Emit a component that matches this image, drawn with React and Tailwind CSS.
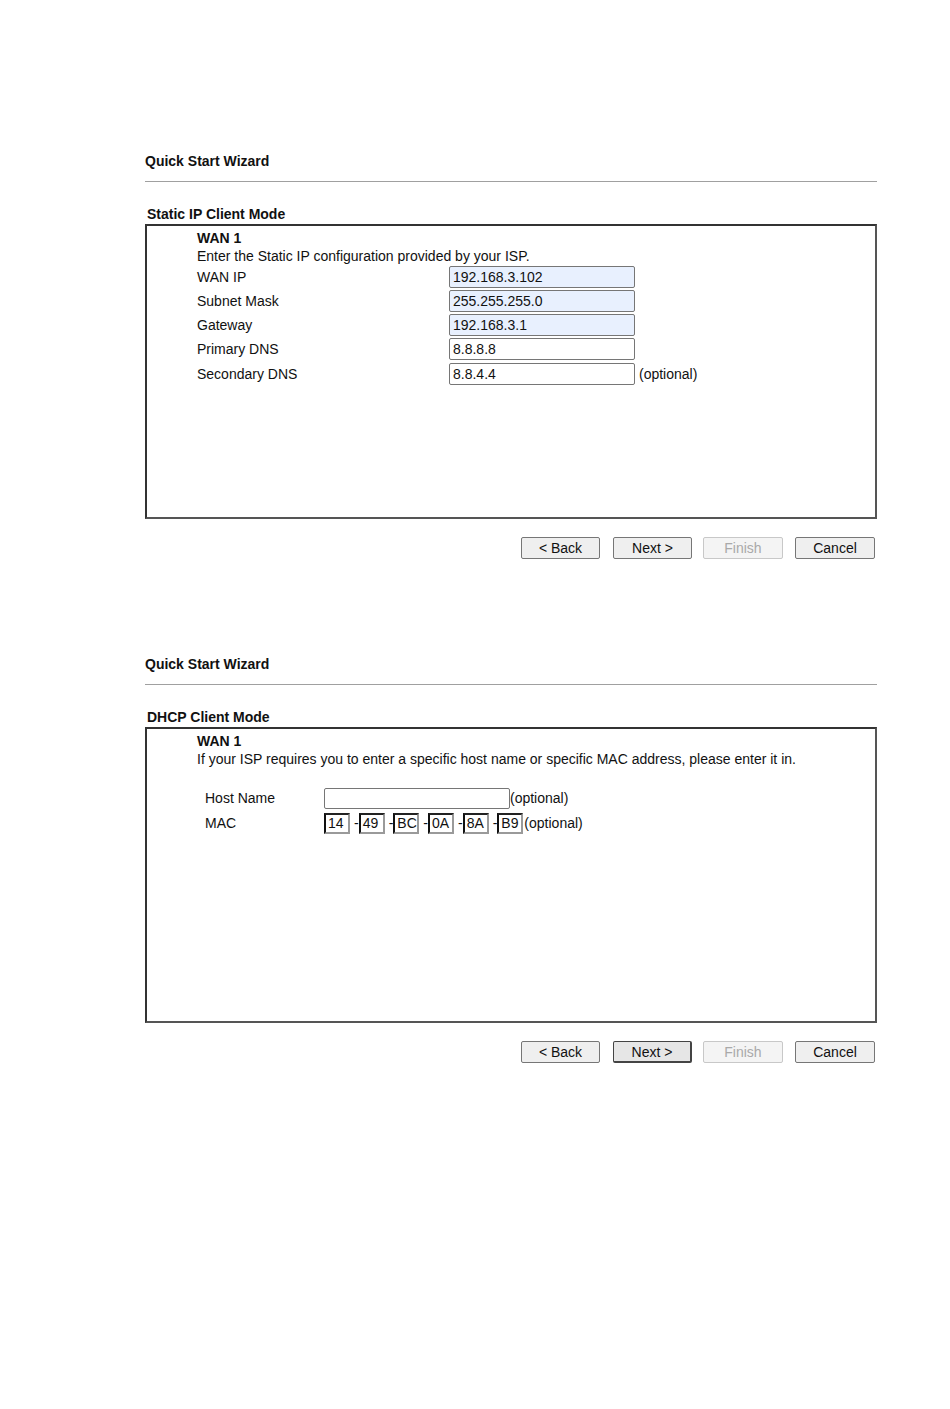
import React from 'react';

const font = { fontFamily: '"Liberation Sans", Arial, sans-serif' };

function Buttons({ nextFocus }) {
  const base = 'h-[22px] rounded-[2px] border text-[14px] leading-[20px] text-center';
  return (
    <div className="flex justify-end pr-[2px] mt-[18px]">
      <button className={`${base} w-[79px] bg-[#efefef] border-[#767676] text-[#111]`}>&lt; Back</button>
      <button className={`${base} w-[79px] ml-[13px] text-[#111] ${nextFocus ? 'border-[#444] border-b-2 border-r-2 bg-[#e6e6e6]' : 'bg-[#efefef] border-[#767676]'}`}>Next &gt;</button>
      <button className={`${base} w-[80px] ml-[11px] bg-[#f4f4f4] border-[#c8c8c8] text-[#a9a9a9]`} disabled>Finish</button>
      <button className={`${base} w-[80px] ml-[12px] bg-[#efefef] border-[#767676] text-[#111]`}>Cancel</button>
    </div>
  );
}

function Field({ value, filled }) {
  return (
    <div className={`h-[22px] w-[186px] border border-[#767676] rounded-[2px] pl-[3px] text-[14px] leading-[20px] text-[#111] ${filled ? 'bg-[#e8f0fe]' : 'bg-white'}`}>
      {value}
    </div>
  );
}

function MacBox({ value }) {
  return (
    <div className="h-[21px] w-[26px] border-2 border-t-[#222] border-l-[#111] border-r-[#9a9a9a] border-b-[#9a9a9a] pl-[2px] text-[14px] leading-[17px] text-[#111] bg-white">
      {value}
    </div>
  );
}

function Section({ mode, boxH, children }) {
  return (
    <div>
      <div className="h-[20px] leading-[20px] text-[14px] font-bold text-[#111]">Quick Start Wizard</div>
      <div className="mt-[10px] h-px bg-[#a0a0a0]" />
      <div className="mt-[24px] h-[16px] leading-[16px] text-[14px] font-bold text-[#111] pl-[2px]">{mode}</div>
      <div className={`mt-[2px] ${boxH} border-2 border-t-[#333] border-l-[#333] border-r-[#555] border-b-[#555] pl-[50px] pt-[3px]`}>
        <div className="text-[14px] leading-[18px] font-bold text-[#111]">WAN 1</div>
        {children}
      </div>
    </div>
  );
}

export default function App() {
  const rows = [
    ['WAN IP', '192.168.3.102', true],
    ['Subnet Mask', '255.255.255.0', true],
    ['Gateway', '192.168.3.1', true],
    ['Primary DNS', '8.8.8.8', false],
    ['Secondary DNS', '8.8.4.4', false],
  ];
  const mac = ['14', '49', 'BC', '0A', '8A', 'B9'];

  return (
    <div className="w-[950px] min-h-[1409px] bg-white" style={font}>
      <div className="ml-[145px] w-[732px] pt-[151px]">
        <Section mode="Static IP Client Mode" boxH="h-[295px]">
          <div className="text-[14px] leading-[18px] text-[#111]">Enter the Static IP configuration provided by your ISP.</div>
          <div className="mt-[1px] flex flex-col gap-[2px]">
            {rows.map(([label, value, filled], i) => (
              <div key={label} className={`flex items-center h-[22px] text-[14px] text-[#111] ${i === 4 ? 'mt-[1px]' : ''}`}>
                <div className="w-[252px]">{label}</div>
                <Field value={value} filled={filled} />
                {i === 4 && <span className="ml-[4px]">(optional)</span>}
              </div>
            ))}
          </div>
        </Section>
        <Buttons />

        <div className="mt-[95px]">
          <Section mode="DHCP Client Mode" boxH="h-[296px]">
            <div className="text-[14px] leading-[18px] text-[#111]">If your ISP requires you to enter a specific host name or specific MAC address, please enter it in.</div>
            <div className="mt-[20px] pl-[8px] flex flex-col gap-[4px] text-[14px] text-[#111]">
              <div className="flex items-center h-[21px]">
                <div className="w-[119px]">Host Name</div>
                <div className="h-[21px] w-[186px] border border-[#767676] rounded-[2px] bg-white" />
                <span>(optional)</span>
              </div>
              <div className="flex items-center h-[21px]">
                <div className="w-[119px]">MAC</div>
                {mac.map((m, i) => (
                  <React.Fragment key={m}>
                    {i > 0 && <span className="ml-[4px]">-</span>}
                    <MacBox value={m} />
                  </React.Fragment>
                ))}
                <span className="ml-[1px]">(optional)</span>
              </div>
            </div>
          </Section>
          <Buttons nextFocus />
        </div>
      </div>
    </div>
  );
}
